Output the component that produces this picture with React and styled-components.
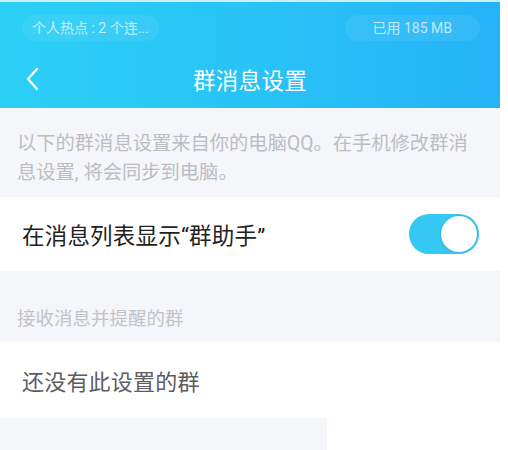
import React, { useState } from 'react';
import styled, { createGlobalStyle } from 'styled-components';

const GlobalStyle = createGlobalStyle`
  html, body {
    margin: 0;
    padding: 0;
    background: #ffffff;
  }
  body {
    font-family: Roboto, "Noto Sans", "Noto Sans CJK SC", sans-serif;
  }
`;

// page column, the screenshot is 500px wide with a white strip on the right
const Page = styled.div`
  width: 500px;
  display: flex;
  flex-direction: column;
`;

const Header = styled.header`
  height: 106px;
  border-top: 2px solid #c9f1fc;
  background: linear-gradient(90deg, #2cd0f6 0%, #29c3f7 50%, #25b3f8 100%);
  display: flex;
  flex-direction: column;
`;

const StatusBar = styled.div`
  display: flex;
  justify-content: space-between;
  align-items: center;
  padding: 13px 20px 0 22px;
`;

const Pill = styled.span`
  height: 26px;
  padding: 0 ${(p) => p.$pad || 10}px;
  border-radius: 13px;
  background: rgba(255, 255, 255, 0.07);
  color: rgba(255, 255, 255, 0.7);
  font-size: 14px;
  line-height: 26px;
  white-space: nowrap;
`;

const NavBar = styled.div`
  flex: 1;
  position: relative;
  display: flex;
  align-items: center;
  justify-content: center;
  padding-top: 8px;
`;

const BackButton = styled.button`
  position: absolute;
  left: 20px;
  top: 23px;
  width: 24px;
  height: 30px;
  padding: 0;
  border: none;
  background: none;
  display: flex;
  align-items: center;
  justify-content: center;
`;

const Title = styled.h1`
  margin: 0;
  color: #ffffff;
  font-size: 22.5px;
  font-weight: 400;
  letter-spacing: 0.3px;
`;

const Note = styled.p`
  margin: 0;
  height: 89px;
  box-sizing: border-box;
  padding: 21px 20px 0 17px;
  background: #f5f6fa;
  color: #bcbdc2;
  font-size: 19.3px;
  line-height: 29px;
`;

const Row = styled.div`
  height: ${(p) => p.$height}px;
  box-sizing: border-box;
  padding: 0 21px 0 22px;
  background: #ffffff;
  display: flex;
  align-items: center;
  justify-content: space-between;
`;

const RowText = styled.span`
  color: ${(p) => p.$color || '#222222'};
  font-size: ${(p) => p.$size || 22.5}px;
  letter-spacing: 0.2px;
`;

const SectionLabel = styled.div`
  height: 71px;
  box-sizing: border-box;
  padding: 20px 17px 0;
  background: #f5f6fa;
  display: flex;
  align-items: center;
  color: #c2c3c8;
  font-size: 18.5px;
`;

const Toggle = styled.button`
  width: 70px;
  height: 40px;
  padding: 2px;
  border: none;
  border-radius: 20px;
  background: ${(p) => (p.$on ? '#35c8f3' : '#e2e3e8')};
  display: flex;
  justify-content: ${(p) => (p.$on ? 'flex-end' : 'flex-start')};
  align-items: center;
  box-sizing: border-box;
  cursor: pointer;
`;

const Knob = styled.span`
  width: 36px;
  height: 36px;
  border-radius: 50%;
  background: #ffffff;
  box-shadow: 0 0 1px 1px rgba(40, 160, 210, 0.45);
`;

const Footer = styled.div`
  width: ${(p) => p.$width}px;
  height: 40px;
  background: #f5f6fa;
`;

const App = () => {
  const [showHelper, setShowHelper] = useState(true);

  return (
    <>
      <GlobalStyle />
      <Page>
        <Header>
          <StatusBar>
            <Pill>个人热点 : 2 个连...</Pill>
            <Pill $pad={28}>已用 185 MB</Pill>
          </StatusBar>
          <NavBar>
            <BackButton aria-label="返回">
              <svg width="14" height="24" viewBox="0 0 14 24">
                <path
                  d="M12 2 L3 12 L12 22"
                  fill="none"
                  stroke="#ffffff"
                  strokeWidth="2.4"
                  strokeLinecap="round"
                  strokeLinejoin="round"
                />
              </svg>
            </BackButton>
            <Title>群消息设置</Title>
          </NavBar>
        </Header>

        <Note>
          以下的群消息设置来自你的电脑QQ。在手机修改群消息设置, 将会同步到电脑。
        </Note>

        <Row $height={74}>
          <RowText>在消息列表显示“群助手”</RowText>
          <Toggle $on={showHelper} onClick={() => setShowHelper(!showHelper)}>
            <Knob />
          </Toggle>
        </Row>

        <SectionLabel>接收消息并提醒的群</SectionLabel>

        <Row $height={76}>
          <RowText $color="#5c5c60" $size={22}>
            还没有此设置的群
          </RowText>
        </Row>

        <Footer $width={327} />
      </Page>
    </>
  );
};

export default App;
